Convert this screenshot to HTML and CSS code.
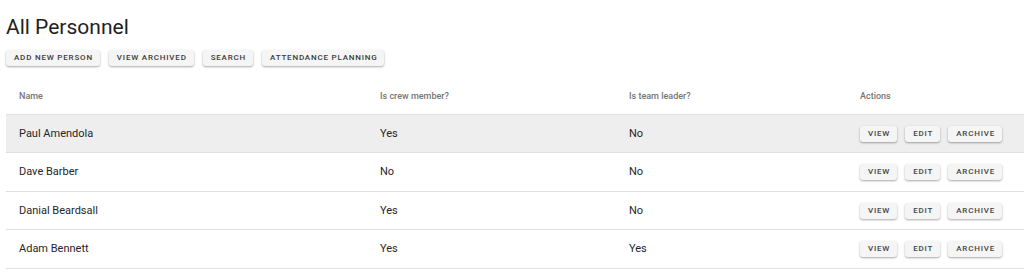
FILE: index.html
```html
<!DOCTYPE html>
<html>
<head>
<meta charset="utf-8">
<link rel="stylesheet" href="styles.css">
</head>
<body>
<div class="page">
  <h1 class="title">All Personnel</h1>
  <div class="toolbar">
    <button class="btn">Add new person</button>
    <button class="btn">View archived</button>
    <button class="btn">Search</button>
    <button class="btn">Attendance planning</button>
  </div>
  <table class="grid">
    <thead>
      <tr>
        <th class="c-name">Name</th>
        <th class="c-crew">Is crew member?</th>
        <th class="c-lead">Is team leader?</th>
        <th class="c-act">Actions</th>
      </tr>
    </thead>
    <tbody>
      <tr class="hover">
        <td>Paul Amendola</td><td>Yes</td><td>No</td>
        <td><div class="actions"><button class="btn sm">View</button><button class="btn sm">Edit</button><button class="btn sm">Archive</button></div></td>
      </tr>
      <tr>
        <td>Dave Barber</td><td>No</td><td>No</td>
        <td><div class="actions"><button class="btn sm">View</button><button class="btn sm">Edit</button><button class="btn sm">Archive</button></div></td>
      </tr>
      <tr>
        <td>Danial Beardsall</td><td>Yes</td><td>No</td>
        <td><div class="actions"><button class="btn sm">View</button><button class="btn sm">Edit</button><button class="btn sm">Archive</button></div></td>
      </tr>
      <tr>
        <td>Adam Bennett</td><td>Yes</td><td>Yes</td>
        <td><div class="actions"><button class="btn sm">View</button><button class="btn sm">Edit</button><button class="btn sm">Archive</button></div></td>
      </tr>
    </tbody>
  </table>
</div>
</body>
</html>
```

FILE: styles.css
```css
* { box-sizing: border-box; }
html, body { margin: 0; padding: 0; background: #fff; }
body { font-family: Roboto, "Liberation Sans", sans-serif; color: #212121; }
.page { padding: 14px 0 0 6px; overflow: hidden; }
.title { margin: 0; font-size: 21px; font-weight: 400; line-height: 26px; color: #212121; }
.toolbar { display: flex; gap: 9px; margin-top: 10px; }
.btn {
  font-family: Roboto, "Liberation Sans", sans-serif;
  font-size: 8px; font-weight: 500; letter-spacing: 0.8px; text-transform: uppercase;
  color: #3a3a3a; background: #f5f5f5; border: 0; border-radius: 3px;
  height: 16px; padding: 0 7px 0 8px; line-height: 16px;
  box-shadow: 0 1px 2px rgba(0,0,0,0.25), 0 1px 3px rgba(0,0,0,0.1);
}
.grid { border-collapse: collapse; width: 1018px; margin-top: 12px; table-layout: fixed; }
.grid th, .grid td { text-align: left; padding: 0 0 0 13px; }
.grid th { font-size: 9px; font-weight: 500; color: #757575; height: 36px; border-bottom: 1px solid #e0e0e0; }
.grid td { font-size: 11px; color: #262626; height: 38.5px; border-bottom: 1px solid #e0e0e0; }
.c-name { width: 361px; }
.c-crew { width: 249px; }
.c-lead { width: 231px; }
.grid tr.hover td { background: #eeeeee; }
.actions { display: flex; gap: 8px; padding-top: 1px; }
.btn.sm { font-size: 8px; height: 16px; line-height: 16px; padding: 0 7px 0 8px; letter-spacing: 0.8px; color: #444; }
```
